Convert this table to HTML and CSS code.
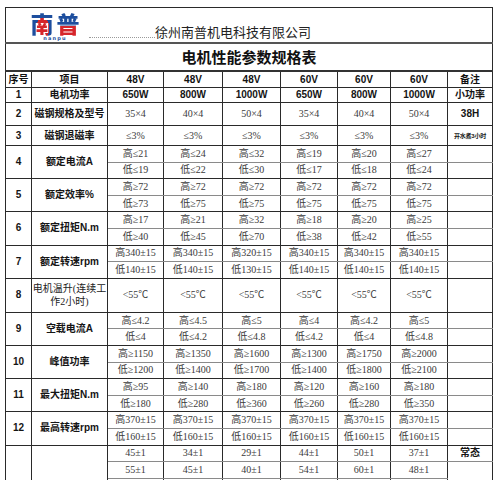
FILE: index.html
```html
<!DOCTYPE html>
<html lang="zh-CN">
<head>
<meta charset="utf-8">
<title>电机性能参数规格表</title>
<link rel="stylesheet" href="styles.css">
</head>
<body>
<table class="spec">
  <colgroup>
    <col class="c-no"><col class="c-item"><col class="c-v1"><col class="c-v2"><col class="c-v3"><col class="c-v4"><col class="c-v5"><col class="c-v6"><col class="c-note">
  </colgroup>
  <tbody>
    <tr class="r-brand">
      <td colspan="9" class="brand-cell">
        <div class="brand">
          <div class="logo">
            <div class="logo-cn"><span class="lg-nan">南</span><span class="lg-pu">普</span></div>
            <div class="logo-en">nanpu</div>
          </div>
          <div class="dots"></div>
          <div class="company">徐州南普机电科技有限公司</div>
        </div>
      </td>
    </tr>
    <tr class="r-title"><td colspan="9" class="title">电机性能参数规格表</td></tr>
    <tr class="r-head">
      <th>序号</th><th>项目</th><th>48V</th><th>48V</th><th>48V</th><th>60V</th><th>60V</th><th>60V</th><th>备注</th>
    </tr>
    <tr class="r-1">
      <td class="no">1</td><td class="item">电机功率</td><td class="b">650W</td><td class="b">800W</td><td class="b">1000W</td><td class="b">650W</td><td class="b">800W</td><td class="b">1000W</td><td class="note">小功率</td>
    </tr>
    <tr class="r-2">
      <td class="no">2</td><td class="item">磁钢规格及型号</td><td>35×4</td><td>40×4</td><td>50×4</td><td>35×4</td><td>40×4</td><td>50×4</td><td class="note">38H</td>
    </tr>
    <tr class="r-3">
      <td class="no">3</td><td class="item">磁钢退磁率</td><td>≤3%</td><td>≤3%</td><td>≤3%</td><td>≤3%</td><td>≤3%</td><td>≤3%</td><td class="note tiny">开水煮3小时</td>
    </tr>

    <tr class="sub top">
      <td class="no" rowspan="2">4</td><td class="item" rowspan="2">额定电流A</td><td>高≤21</td><td>高≤24</td><td>高≤32</td><td>高≤19</td><td>高≤20</td><td>高≤27</td><td></td>
    </tr>
    <tr class="sub bot"><td>低≤19</td><td>低≤22</td><td>低≤30</td><td>低≤17</td><td>低≤18</td><td>低≤24</td><td></td></tr>

    <tr class="sub top">
      <td class="no" rowspan="2">5</td><td class="item" rowspan="2">额定效率%</td><td>高≥72</td><td>高≥72</td><td>高≥72</td><td>高≥72</td><td>高≥72</td><td>高≥72</td><td></td>
    </tr>
    <tr class="sub bot"><td>低≥73</td><td>低≥75</td><td>低≥75</td><td>低≥75</td><td>低≥75</td><td>低≥75</td><td></td></tr>

    <tr class="sub top">
      <td class="no" rowspan="2">6</td><td class="item" rowspan="2">额定扭矩N.m</td><td>高≥17</td><td>高≥21</td><td>高≥32</td><td>高≥18</td><td>高≥20</td><td>高≥25</td><td></td>
    </tr>
    <tr class="sub bot"><td>低≥40</td><td>低≥45</td><td>低≥70</td><td>低≥38</td><td>低≥42</td><td>低≥55</td><td></td></tr>

    <tr class="sub top">
      <td class="no" rowspan="2">7</td><td class="item" rowspan="2">额定转速rpm</td><td>高340±15</td><td>高340±15</td><td>高320±15</td><td>高340±15</td><td>高340±15</td><td>高340±15</td><td></td>
    </tr>
    <tr class="sub bot"><td>低140±15</td><td>低140±15</td><td>低130±15</td><td>低140±15</td><td>低140±15</td><td>低140±15</td><td></td></tr>

    <tr class="r-8">
      <td class="no">8</td><td class="item plain">电机温升(连续工作2小时)</td><td>&lt;55℃</td><td>&lt;55℃</td><td>&lt;55℃</td><td>&lt;55℃</td><td>&lt;55℃</td><td>&lt;55℃</td><td></td>
    </tr>

    <tr class="sub top">
      <td class="no" rowspan="2">9</td><td class="item" rowspan="2">空载电流A</td><td>高≤4.2</td><td>高≤4.5</td><td>高≤5</td><td>高≤4</td><td>高≤4.2</td><td>高≤5</td><td></td>
    </tr>
    <tr class="sub bot"><td>低≤4</td><td>低≤4.2</td><td>低≤4.8</td><td>低≤4.2</td><td>低≤4</td><td>低≤4.8</td><td></td></tr>

    <tr class="sub top">
      <td class="no" rowspan="2">10</td><td class="item" rowspan="2">峰值功率</td><td>高≥1150</td><td>高≥1350</td><td>高≥1600</td><td>高≥1300</td><td>高≥1750</td><td>高≥2000</td><td></td>
    </tr>
    <tr class="sub bot"><td>低≥1200</td><td>低≥1400</td><td>低≥1700</td><td>低≥1400</td><td>低≥1800</td><td>低≥2100</td><td></td></tr>

    <tr class="sub top">
      <td class="no" rowspan="2">11</td><td class="item" rowspan="2">最大扭矩N.m</td><td>高≥95</td><td>高≥140</td><td>高≥180</td><td>高≥120</td><td>高≥160</td><td>高≥180</td><td></td>
    </tr>
    <tr class="sub bot"><td>低≥180</td><td>低≥280</td><td>低≥360</td><td>低≥260</td><td>低≥280</td><td>低≥350</td><td></td></tr>

    <tr class="sub top">
      <td class="no" rowspan="2">12</td><td class="item" rowspan="2">最高转速rpm</td><td>高370±15</td><td>高370±15</td><td>高370±15</td><td>高370±15</td><td>高370±15</td><td>高370±15</td><td></td>
    </tr>
    <tr class="sub bot"><td>低160±15</td><td>低160±15</td><td>低160±15</td><td>低160±15</td><td>低160±15</td><td>低160±15</td><td></td></tr>

    <tr class="sub top">
      <td class="no" rowspan="3"></td><td class="item" rowspan="3"></td><td>45±1</td><td>34±1</td><td>29±1</td><td>44±1</td><td>50±1</td><td>37±1</td><td class="note">常态</td>
    </tr>
    <tr class="sub mid"><td>55±1</td><td>45±1</td><td>40±1</td><td>54±1</td><td>60±1</td><td>48±1</td><td class="note wet" rowspan="2">恒定湿热</td></tr>
    <tr class="sub bot"><td>&nbsp;</td><td>&nbsp;</td><td>&nbsp;</td><td>&nbsp;</td><td>&nbsp;</td><td>&nbsp;</td></tr>
  </tbody>
</table>
</body>
</html>
```
FILE: styles.css
```css
html, body {
  margin: 0;
  padding: 0;
  background: #ffffff;
}

body {
  padding: 7px 0 0 5px;
  font-family: "Liberation Serif", "Noto Sans CJK SC", serif;
  color: #3a3a3a;
}

.spec {
  border-collapse: collapse;
  table-layout: fixed;
  width: 488px;
}

.c-no { width: 26px; }
.c-item { width: 76px; }
.c-v1 { width: 56px; }
.c-v2 { width: 59px; }
.c-v3 { width: 58px; }
.c-v4 { width: 57px; }
.c-v5 { width: 53px; }
.c-v6 { width: 57px; }
.c-note { width: 45px; }

.spec td, .spec th {
  border: 1px solid #2a2a2a;
  padding: 0;
  text-align: center;
  vertical-align: middle;
  font-size: 10px;
  line-height: 12px;
  white-space: nowrap;
  overflow: hidden;
}

.spec th {
  font-family: "Liberation Sans", "Noto Sans CJK SC", sans-serif;
  font-weight: bold;
  color: #111;
  height: 15px;
}

/* brand row */
.brand-cell {
  height: 34px;
  border-bottom: 2px solid #555 !important;
}

.brand {
  display: flex;
  align-items: flex-end;
  height: 34px;
}

.logo {
  margin-left: 21px;
  width: 56px;
  display: flex;
  flex-direction: column;
  align-items: center;
  padding-bottom: 1px;
}

.logo-cn {
  font-family: "Noto Sans CJK SC", sans-serif;
  font-weight: 900;
  font-size: 23px;
  line-height: 23px;
  letter-spacing: 3px;
  margin-right: -3px;
  white-space: nowrap;
}

.lg-nan, .lg-pu {
  padding: 5px 0;
  -webkit-background-clip: text;
  background-clip: text;
  color: transparent;
}

.lg-nan {
  background-image: radial-gradient(ellipse 26% 24% at 45% 62%, #d6262b 98%, #1d4e9e 100%);
}

.lg-pu {
  background-image: linear-gradient(#1d4e9e 0 57%, #d6262b 57%);
}

.logo-en {
  font-family: "DejaVu Sans", sans-serif;
  font-weight: bold;
  font-size: 5px;
  line-height: 6px;
  letter-spacing: 1.2px;
  color: #1d4e9e;
}

.dots {
  width: 66px;
  margin-left: 6px;
  margin-bottom: 4px;
  border-bottom: 1px dotted #9a9a9a;
}

.company {
  margin-left: 0;
  margin-bottom: 2px;
  font-family: "Noto Sans CJK SC", serif;
  font-size: 13px;
  line-height: 16px;
  color: #222;
}

/* title row */
.title {
  height: 26px;
  font-family: "Noto Sans CJK SC", sans-serif;
  font-weight: bold;
  font-size: 15px !important;
  line-height: 18px !important;
  color: #111 !important;
  border-bottom: 2px solid #333 !important;
}

.r-1 td { height: 14px; }
.r-2 td { height: 22px; }
.r-3 td { height: 19px; }
.r-8 td { height: 33px; }

.sub td { height: 15.6px; }
.sub.top td, .sub.mid td { border-bottom-color: #8a8a8a; }
.sub.mid td, .sub.bot td { border-top-color: #8a8a8a; }
.sub.top td[rowspan], .sub.mid td[rowspan] { border-bottom-color: #2a2a2a; }

.no, .item, .b, .note {
  font-family: "Liberation Sans", "Noto Sans CJK SC", sans-serif;
  font-weight: bold;
  color: #151515;
}

.item.plain {
  font-family: "Liberation Serif", "Noto Sans CJK SC", serif;
  font-weight: normal;
  white-space: normal;
  line-height: 13px;
  color: #222;
}

.tiny {
  font-size: 6px !important;
  letter-spacing: -0.2px;
}

.wet {
  vertical-align: bottom !important;
  padding-top: 6px !important;
}
```
